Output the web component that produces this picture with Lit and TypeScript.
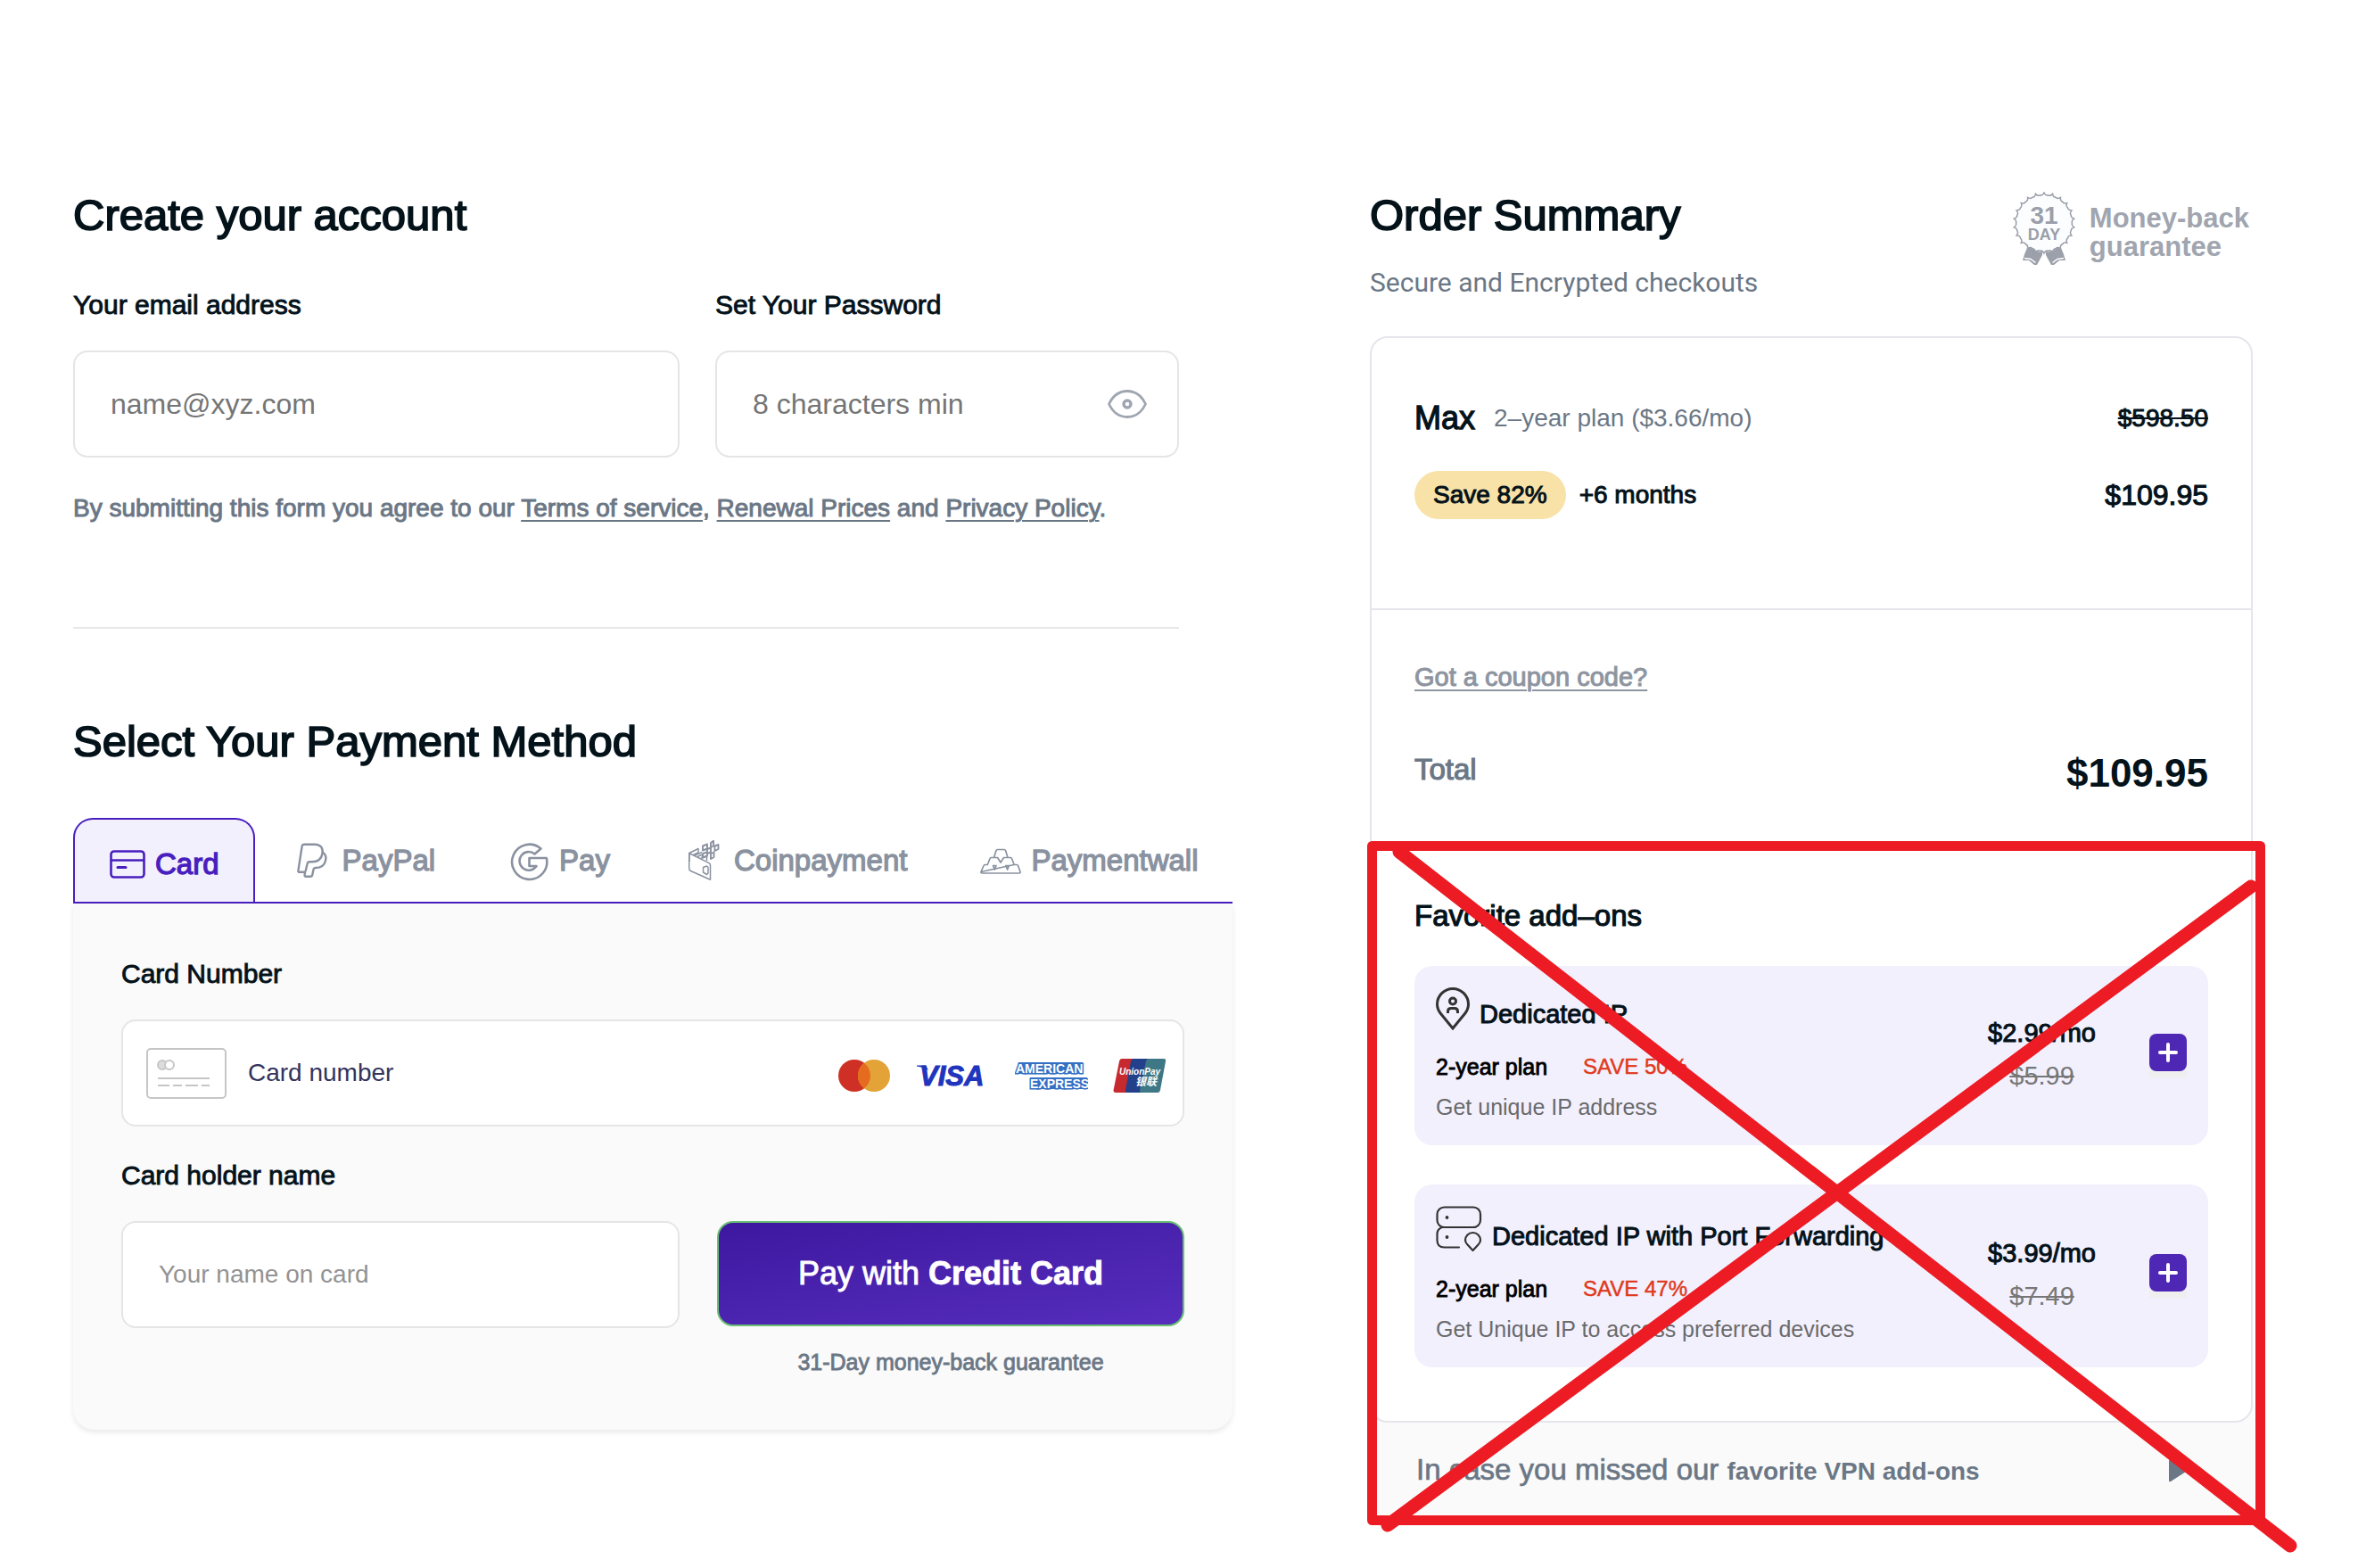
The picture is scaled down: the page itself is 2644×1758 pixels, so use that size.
import { LitElement, html, css, svg } from "lit";
import { customElement, property, state } from "lit/decorators.js";
import { classMap } from "lit/directives/class-map.js";

/* ---------- icons ---------- */

const iconCard = svg`<svg class="icon-card" width="40" height="32" viewBox="0 0 40 32" fill="none" stroke="currentColor" stroke-width="2.6" stroke-linecap="round" aria-hidden="true">
  <rect x="1.5" y="1.5" width="37" height="29" rx="3.5"/><path d="M2 11.5H38"/><path d="M9 19.5H18" stroke-width="3"/></svg>`;

const iconPaypal = svg`<svg width="46" height="46" viewBox="0 0 46 46" fill="none" stroke="currentColor" stroke-width="2.4" stroke-linejoin="round" aria-hidden="true">
  <path d="M11.6 7q.3-2.3 2.6-2.3H26C33 4.7 35.5 9.5 34.5 15 33.2 22 28.5 24.3 23 24.3h-2.5q-2.6 0-3 2.4L15.8 34q-.4 1.8-2 1.8H8.8q-1.6 0-1.4-1.7Z"/>
  <path d="M34.6 13.5C38 15.5 39 19 38 23 36.6 28.8 32.5 31 27 31h-.5q-1.6 0-2 1.8l-1.2 6q-.4 1.9-2.2 1.9H16q-1.7 0-1.4-1.7l.6-3.5"/></svg>`;

const iconGoogle = svg`<svg width="46" height="46" viewBox="0 0 46 46" fill="none" stroke="currentColor" stroke-width="2.6" stroke-linejoin="round" aria-hidden="true">
  <path d="M36.5 9.5A19.6 19.6 0 1 0 42.8 20H23.5V29H31.5A10.3 10.3 0 1 1 29.5 15.5Z"/></svg>`;

const iconCoins = svg`<svg width="46" height="46" viewBox="0 0 46 46" fill="none" stroke="currentColor" stroke-width="1.5" stroke-linejoin="round" aria-hidden="true">
  <path d="M6.7 14.5V31.5Q6.7 33.5 8.5 34.5L30.5 44.3V28Q30.5 26.5 29 25.7L6.7 14.5L17 9.5V14L11.5 16.5"/>
  <path d="M7 15.5V24"/><path d="M22.5 30.5l4-1.5 1.5 1.5v6.5l-1.5 1.5-4-2.5z"/>
  <path d="M16 18.5l5.5-2.5v4M19.5 20.5l7-2.5v5M13 17l8-3.5"/>
  <path d="M22 6.5l5-2v5l-5 2zM31 3l3-2.3v5.8l-3 1.5zM27 10l4-1.5v5l-4 1.5zM35.5 6.5l4-1.5v5l-4 2zM22 15l5-1.5v4l-5 2zM31 15l3.5-1.5v5.5l-3.5 2z" stroke-width="1.9"/></svg>`;

const iconWall = svg`<svg width="46" height="46" viewBox="0 0 46 46" fill="none" stroke="currentColor" stroke-width="1.7" stroke-linejoin="round" aria-hidden="true">
  <path d="M15.5 19.5L18 11.5Q18.3 10.5 19.5 10.5H27Q28.2 10.5 28.5 11.5L31 19.5"/>
  <path d="M8.5 27L11 20.5Q11.3 19.5 12.5 19.5H19.5L23 25L26.5 19.5H34Q35.2 19.5 35.5 20.5L38 27"/>
  <path d="M1 35.5L4 28.5Q4.4 27.5 5.5 27.5H9M38 27.5H41Q42.1 27.5 42.5 28.5L45 35.5Q45.3 37 44 37H2Q.7 37 1 35.5Z"/>
  <path d="M14.5 28.5h3.5l-1.7 4.5zM28.8 28.5h3.5l-1.7 4.5z"/></svg>`;

const iconEye = svg`<svg width="44" height="32" viewBox="0 0 44 32" fill="none" stroke="#9fa6b2" stroke-width="2.8" aria-hidden="true">
  <path d="M1.5 16C6 6.5 13 1.5 22 1.5S38 6.5 42.5 16C38 25.5 31 30.5 22 30.5S6 25.5 1.5 16Z"/><circle cx="22" cy="16" r="4" stroke-width="3.4"/></svg>`;

const iconBlankCard = svg`<svg width="90" height="57" viewBox="0 0 90 57" fill="none" stroke="#c6c6c6" stroke-width="2" aria-hidden="true">
  <rect x="1" y="1" width="88" height="55" rx="4" fill="#fff"/>
  <circle cx="18" cy="19" r="5" fill="#dcdcdc"/><circle cx="26" cy="19" r="5" fill="#fff"/>
  <path d="M13 34H71M13 42H26M30 42H40M44 42H58M62 42H71"/></svg>`;

const logoMastercard = svg`<svg width="58" height="38" viewBox="0 0 58 38" role="img" aria-label="Mastercard">
  <circle cx="18" cy="19" r="18" fill="#cf3025"/><circle cx="40" cy="19" r="18" fill="#e3a336"/>
  <path d="M29 4.8a18 18 0 0 1 0 28.4a18 18 0 0 1 0-28.4z" fill="#e56b1f"/></svg>`;

const logoVisa = svg`<svg width="84" height="38" viewBox="0 0 84 38" role="img" aria-label="Visa">
  <path d="M2 7.5H12L15 13Q10 9.5 2 8.5Z" fill="#1f35bd"/>
  <text x="5" y="30" class="logo-visa">VISA</text></svg>`;

const logoAmex = svg`<svg width="82" height="38" viewBox="0 0 82 38" role="img" aria-label="American Express">
  <path d="M4 4H76V17H1ZM17 21H81V34H17Z" fill="#3470c4"/>
  <text x="1" y="15.5" class="logo-amex">AMERICAN</text><text x="17" y="32.5" class="logo-amex">EXPRESS</text></svg>`;

const logoUnionpay = svg`<svg width="60" height="38" viewBox="0 0 60 38" role="img" aria-label="UnionPay">
  <path d="M10 0H26L18 38H3Q0 38 .6 35L7 3Q7.6 0 10 0Z" fill="#c62a2e"/>
  <path d="M23 0H42L34 38H16Q13.4 38 14 35L20 3Q20.6 0 23 0Z" fill="#22418a"/>
  <path d="M40 0H57Q59.6 0 59 3L53 35Q52.4 38 50 38H32Q29.4 38 30 35L37 3Q37.6 0 40 0Z" fill="#3e7886"/>
  <text x="7" y="18" class="logo-union">UnionPay</text><text x="25" y="30" class="logo-union-cjk">银联</text></svg>`;

const iconPin = svg`<svg width="38" height="48" viewBox="0 0 38 48" fill="none" stroke="#333" stroke-width="3" aria-hidden="true">
  <path d="M19 46L5.5 29.5Q1.5 24.5 1.5 19A17.5 17.5 0 0 1 36.5 19Q36.5 24.5 32.5 29.5Z"/>
  <circle cx="19" cy="15.5" r="3.5"/><path d="M13.5 29V27q0-3.5 3.5-3.5h4q3.5 0 3.5 3.5v2"/></svg>`;

const iconServer = svg`<svg width="52" height="52" viewBox="0 0 52 52" fill="none" stroke="#333" stroke-width="2.2" stroke-linecap="round" stroke-linejoin="round" aria-hidden="true">
  <rect x="1.5" y="1.5" width="48.5" height="22.5" rx="8"/>
  <path d="M7 24Q1.5 26 1.5 31.5V38.5Q1.5 46.5 9.5 46.5H26"/><path d="M44 24H7"/>
  <path d="M41.5 50L35.5 43.5Q33 41 33 38.5A8.5 8.5 0 0 1 50 38.5Q50 41 47.5 43.5Z"/>
  <circle cx="12.5" cy="13" r=".8" fill="#333"/><circle cx="12.5" cy="35" r=".8" fill="#333"/></svg>`;

const iconPlus = svg`<svg width="42" height="42" viewBox="0 0 42 42" aria-hidden="true">
  <rect width="42" height="42" rx="8" fill="#4e27b5"/><path d="M12 21H30M21 12V30" stroke="#fff" stroke-width="4" stroke-linecap="round"/></svg>`;

const iconArrow = svg`<svg width="20" height="26" viewBox="0 0 20 26" aria-hidden="true"><path d="M0 2Q0 0 2 1L19 12Q20 13 19 14L2 25Q0 26 0 24Z" fill="#6b7785"/></svg>`;

/** Scalloped outline of the guarantee seal. */
const sealPath = (() => {
  const teeth = 22;
  let d = "";
  for (let i = 0; i < teeth; i++) {
    const at = (k: number, r: number) => {
      const a = ((i + k) / teeth) * Math.PI * 2 - Math.PI / 2;
      return `${(35 + r * Math.cos(a)).toFixed(2)} ${(35 + r * Math.sin(a)).toFixed(2)}`;
    };
    d += `${i ? "L" : "M"}${at(0, 34)}Q${at(0.2, 30.5)} ${at(0.5, 31.5)}Q${at(0.8, 30.5)} ${at(1, 34)}`;
  }
  return d + "Z";
})();

const iconSeal = svg`<svg width="70" height="84" viewBox="0 0 70 84" role="img" aria-label="31 day seal">
  <path d="${sealPath}" fill="#fcfdff" stroke="#9a9fa9" stroke-width="1.5"/>
  <path d="M16 63Q22 62 25 66Q29 68 33 67L33 71L27 82L24 82L18 77L11 77Q13 69 16 63Z" fill="#9ba0ab"/>
  <path d="M54 63Q48 62 46 66Q41 68 37 67L37 71L43 82L46 82L52 77L59 77Q57 69 54 63Z" fill="#9ba0ab"/>
  <path d="M13 74.5L20 75.5L25.5 79.5M57 74.5L50 75.5L44.5 79.5" stroke="#fff" stroke-width="1.5" fill="none"/>
  <text x="35" y="36" class="seal-num">31</text><text x="35" y="54" class="seal-day">DAY</text></svg>`;

/* ---------- shared styles ---------- */

const base = css`
  * {
    box-sizing: border-box;
  }
  h1, h2, h3, p {
    margin: 0;
    font-weight: 400;
  }
  button, input {
    font-family: inherit;
    color: inherit;
    margin: 0;
    padding: 0;
    border: 0;
    background: none;
  }
  button {
    cursor: pointer;
  }
  svg {
    display: block;
    flex: none;
  }
  .medium {
    -webkit-text-stroke: 0.035em currentColor;
  }
  .title {
    font-size: 49px;
    line-height: 56px;
    -webkit-text-stroke: 0.035em currentColor;
  }
`;

interface Method {
  id: string;
  label: string;
  icon: unknown;
}

const methods: Method[] = [
  { id: "card", label: "Card", icon: iconCard },
  { id: "paypal", label: "PayPal", icon: iconPaypal },
  { id: "gpay", label: "Pay", icon: iconGoogle },
  { id: "coin", label: "Coinpayment", icon: iconCoins },
  { id: "wall", label: "Paymentwall", icon: iconWall },
];

@customElement("checkout-form")
export class CheckoutForm extends LitElement {
  @state() private method = "card";
  @state() private showPassword = false;

  static styles = [
    base,
    css`
      :host {
        display: block;
        min-width: 0;
      }
      .account {
        padding-right: 60px;
      }
      .account-fields {
        display: grid;
        grid-template-columns: 680fr 520fr;
        gap: 40px;
        margin-top: 55px;
      }
      .field {
        display: flex;
        flex-direction: column;
        gap: 33px;
        min-width: 0;
      }
      .label {
        font-size: 30px;
        line-height: 36px;
        -webkit-text-stroke: 0.03em currentColor;
      }
      .box {
        display: flex;
        align-items: center;
        height: 120px;
        border: 2px solid #e5e5e5;
        border-radius: 16px;
        background: #fff;
        padding: 0 34px 0 40px;
      }
      .box input {
        flex: 1;
        min-width: 0;
        height: 100%;
        font-size: 32px;
        outline: none;
      }
      .box input::placeholder {
        color: #757575;
        opacity: 1;
      }
      .terms {
        margin-top: 39px;
        font-size: 28px;
        line-height: 36px;
        color: #6b7785;
      }
      .terms a {
        color: inherit;
        text-underline-offset: 4px;
        text-decoration-thickness: 2px;
      }
      .rule {
        margin: 115px 0 98px;
        border: 0;
        border-top: 2px solid #e8e8e8;
      }
      .tabs {
        display: flex;
        margin-top: 58px;
        border-bottom: 2px solid #481fbe;
        min-height: 96px;
      }
      .tab {
        display: flex;
        align-items: center;
        justify-content: center;
        gap: 11px;
        padding: 2px 41px 0;
        font-size: 33px;
        line-height: 40px;
        color: #8a92a0;
        white-space: nowrap;
        -webkit-text-stroke: 0.04em currentColor;
      }
      .tab.active {
        color: #481fbe;
        background: #f3f0fe;
        border: 2px solid #481fbe;
        border-bottom: 0;
        border-radius: 22px 22px 0 0;
        padding: 8px 38px 0 39px;
      }
      .panel {
        background: #fafafa;
        border-radius: 0 0 24px 24px;
        box-shadow: 0 3px 6px rgba(0, 0, 0, 0.09);
        padding: 61px 54px 60px;
      }
      .card-box {
        padding: 0 18px 0 26px;
        gap: 24px;
      }
      .card-box input,
      .name-box input {
        font-size: 28px;
      }
      .card-box input::placeholder {
        color: #33345c;
      }
      .name-box input::placeholder {
        color: #939393;
      }
      .brands {
        display: flex;
        align-items: center;
        gap: 28px;
        padding-top: 6px;
      }
      .pay-row {
        display: grid;
        grid-template-columns: 626fr 524fr;
        column-gap: 42px;
        align-items: start;
        margin-top: 37px;
      }
      .pay-col {
        display: flex;
        flex-direction: column;
        padding-top: 69px;
      }
      .pay {
        height: 118px;
        border: 2px solid #69bf73;
        border-radius: 18px;
        background: linear-gradient(170deg, #3d189f, #562dbd);
        color: #fff;
        font-size: 36px;
        -webkit-text-stroke: 0.025em currentColor;
      }
      .note {
        margin-top: 24px;
        font-size: 25px;
        line-height: 32px;
        text-align: center;
        color: #6b7785;
      }
      .logo-visa {
        font: italic 900 31px "Liberation Sans", Arial, sans-serif;
        fill: #1f35bd;
        stroke: #1f35bd;
        stroke-width: 1px;
      }
      .logo-amex {
        font: 700 14px "Liberation Sans", Arial, sans-serif;
        fill: #fff;
        stroke: #3470c4;
        stroke-width: 3px;
        paint-order: stroke;
      }
      .logo-union {
        font: italic 700 10px "Liberation Sans", Arial, sans-serif;
        fill: #fff;
      }
      .logo-union-cjk {
        font: italic 700 12px "Noto Sans CJK SC", sans-serif;
        fill: #fff;
      }
    `,
  ];

  render() {
    return html`
      <section class="account">
        <h1 class="title">Create your account</h1>
        <div class="account-fields">
          <div class="field">
            <label class="label" for="email">Your email address</label>
            <div class="box"><input id="email" type="email" placeholder="name@xyz.com" /></div>
          </div>
          <div class="field">
            <label class="label" for="password">Set Your Password</label>
            <div class="box">
              <input id="password" type=${this.showPassword ? "text" : "password"} placeholder="8 characters min" />
              <button type="button" aria-label="Show password" @click=${() => (this.showPassword = !this.showPassword)}>${iconEye}</button>
            </div>
          </div>
        </div>
        <p class="terms medium">By submitting this form you agree to our <a href="#terms">Terms of service</a>, <a href="#renewal">Renewal Prices</a> and <a href="#privacy">Privacy Policy</a>.</p>
        <hr class="rule" />
      </section>
      <section>
        <h2 class="title">Select Your Payment Method</h2>
        <div class="tabs" role="tablist">
          ${methods.map(
            (m) => html`<button type="button" role="tab" aria-selected=${m.id === this.method ? "true" : "false"}
              class=${classMap({ tab: true, active: m.id === this.method })}
              @click=${() => (this.method = m.id)}>${m.icon}<span>${m.label}</span></button>`
          )}
        </div>
        <div class="panel">
          <div class="field">
            <label class="label" for="number">Card Number</label>
            <div class="box card-box">
              ${iconBlankCard}
              <input id="number" inputmode="numeric" placeholder="Card number" />
              <div class="brands">${logoMastercard}${logoVisa}${logoAmex}${logoUnionpay}</div>
            </div>
          </div>
          <div class="pay-row">
            <div class="field">
              <label class="label" for="holder">Card holder name</label>
              <div class="box name-box"><input id="holder" placeholder="Your name on card" /></div>
            </div>
            <div class="pay-col">
              <button type="button" class="pay">Pay with <b>Credit Card</b></button>
              <p class="note medium">31-Day money-back guarantee</p>
            </div>
          </div>
        </div>
      </section>
    `;
  }
}

@customElement("addon-item")
export class AddonItem extends LitElement {
  @property() name = "";
  @property() save = "";
  @property() info = "";
  @property() price = "";
  @property() was = "";
  @property({ attribute: false }) icon: unknown;

  static styles = [
    base,
    css`
      :host {
        display: flex;
        align-items: center;
        background: #f3f0fe;
        border-radius: 20px;
        padding: 24px 24px 27px 24px;
      }
      .main {
        flex: 1;
        min-width: 0;
      }
      .head {
        display: flex;
        align-items: flex-end;
        gap: 11px;
      }
      .name, .price, .was {
        font-size: 29px;
        line-height: 36px;
      }
      .plan {
        display: flex;
        gap: 40px;
        margin-top: 25px;
        font-size: 25px;
        line-height: 32px;
        color: #000;
      }
      .save {
        color: #e03a1c;
        font-size: 24px;
        -webkit-text-stroke: 0.02em currentColor;
      }
      .info {
        margin-top: 13px;
        font-size: 25px;
        line-height: 32px;
        color: #6a6a6a;
      }
      .prices {
        display: flex;
        flex-direction: column;
        align-items: center;
        gap: 12px;
        margin-right: 60px;
      }
      .was {
        color: #777;
      }
      .add {
        margin-top: 3px;
        height: 49px;
        background: #efefef;
        display: flex;
        align-items: flex-start;
      }
    `,
  ];

  render() {
    return html`
      <div class="main">
        <div class="head">${this.icon}<h3 class="name medium">${this.name}</h3></div>
        <p class="plan"><span class="medium">2-year plan</span><span class="save">${this.save}</span></p>
        <p class="info">${this.info}</p>
      </div>
      <div class="prices"><span class="price medium">${this.price}</span><s class="was">${this.was}</s></div>
      <button type="button" class="add" aria-label=${"Add " + this.name}>${iconPlus}</button>
    `;
  }
}

@customElement("order-summary")
export class OrderSummary extends LitElement {
  static styles = [
    base,
    css`
      :host {
        display: block;
        position: relative;
        min-width: 0;
      }
      .header {
        display: flex;
        justify-content: space-between;
        align-items: flex-start;
      }
      .sub {
        margin-top: 30px;
        font: 400 30px/36px Roboto, "Liberation Sans", sans-serif;
        color: #6b7785;
      }
      .badge {
        display: flex;
        align-items: center;
        gap: 16px;
        padding: 2px 4px 0 0;
      }
      .badge-text {
        padding-top: 8px;
        font-size: 31px;
        line-height: 32px;
        font-weight: 700;
        color: #a0a5af;
      }
      .seal-num, .seal-day {
        font: 700 28px "Liberation Sans", Arial, sans-serif;
        fill: #9a9fa9;
        text-anchor: middle;
      }
      .seal-day {
        font: 700 18px "Liberation Sans Narrow", "Liberation Sans", sans-serif;
      }
      .card {
        position: relative;
        margin-top: 42px;
        border: 2px solid #e5e5ec;
        border-radius: 20px;
        background: #fff;
      }
      .plan {
        padding: 68px 48px 100px;
        border-bottom: 2px solid #e5e5ec;
      }
      .row {
        display: flex;
        align-items: center;
      }
      .row + .row {
        margin-top: 37px;
      }
      .push {
        margin-left: auto;
      }
      .max {
        font-size: 36px;
        line-height: 44px;
        margin-right: 21px;
      }
      .text {
        font-size: 28px;
        line-height: 36px;
      }
      .muted {
        color: #6b7785;
      }
      .pill {
        background: #f9e2a8;
        border-radius: 27px;
        padding: 9px 21px;
        margin-right: 15px;
        font-size: 28px;
        line-height: 36px;
      }
      .price {
        font-size: 32px;
        line-height: 40px;
      }
      .totals {
        padding: 57px 48px 60px;
      }
      .coupon {
        display: inline-block;
        font-size: 29px;
        line-height: 36px;
        color: #8d95a1;
        text-underline-offset: 4px;
        text-decoration-thickness: 2px;
      }
      .total {
        display: flex;
        align-items: flex-start;
        justify-content: space-between;
        margin-top: 62px;
      }
      .total-label {
        font-size: 33px;
        line-height: 48px;
        color: #6b7785;
      }
      .total-sum {
        font-size: 44px;
        line-height: 56px;
        font-weight: 700;
      }
      .fav {
        margin: 112px 0 36px;
        font-size: 33px;
        line-height: 40px;
      }
      .addons {
        display: flex;
        flex-direction: column;
        gap: 44px;
      }
      .more {
        display: flex;
        align-items: center;
        justify-content: space-between;
        width: 100%;
        margin-top: -24px;
        padding: 57px 74px 34px 52px;
        background: #fafafa;
        border-radius: 0 0 20px 20px;
        box-shadow: 0 2px 5px rgba(0, 0, 0, 0.06);
        color: #6b7785;
        font-size: 33px;
        line-height: 40px;
        text-align: left;
      }
      .more b {
        font-size: 28px;
        -webkit-text-stroke: 0;
      }
      .more-text {
        -webkit-text-stroke: 0.02em currentColor;
      }
      /* Hand-drawn markup laid over the add-ons. */
      .markup {
        position: absolute;
        left: -6px;
        top: 727px;
        pointer-events: none;
      }
    `,
  ];

  render() {
    return html`
      <header class="header">
        <div>
          <h2 class="title">Order Summary</h2>
          <p class="sub">Secure and Encrypted checkouts</p>
        </div>
        <div class="badge">${iconSeal}<div class="badge-text">Money-back<br />guarantee</div></div>
      </header>
      <div class="card">
        <div class="plan">
          <div class="row">
            <span class="max medium">Max</span><span class="text muted">2–year plan ($3.66/mo)</span>
            <s class="text medium push">$598.50</s>
          </div>
          <div class="row">
            <span class="pill medium">Save 82%</span><span class="text medium">+6 months</span>
            <span class="price medium push">$109.95</span>
          </div>
        </div>
        <div class="totals">
          <a class="coupon medium" href="#coupon">Got a coupon code?</a>
          <div class="total"><span class="total-label medium">Total</span><span class="total-sum">$109.95</span></div>
          <h3 class="fav medium">Favorite add–ons</h3>
          <div class="addons">
            <addon-item .icon=${iconPin} name="Dedicated IP" save="SAVE 50%" info="Get unique IP address" price="$2.99/mo" was="$5.99"></addon-item>
            <addon-item .icon=${iconServer} name="Dedicated IP with Port Forwarding" save="SAVE 47%" info="Get Unique IP to access preferred devices" price="$3.99/mo" was="$7.49"></addon-item>
          </div>
        </div>
      </div>
      <button type="button" class="more">
        <span class="more-text">In case you missed our <b>favorite VPN add-ons</b></span>
        ${iconArrow}
      </button>
      <svg class="markup" width="1050" height="805" viewBox="1530 940 1050 805" fill="none" stroke="#ed1c24" stroke-linecap="round" stroke-linejoin="round" aria-hidden="true">
        <rect x="1538.5" y="948.5" width="996" height="756" stroke-width="11"/>
        <path d="M1569 955L2568 1733M1556 1710L2524 994" stroke-width="15"/>
      </svg>
    `;
  }
}

@customElement("app-root")
export class AppRoot extends LitElement {
  static styles = css`
    :host {
      display: block;
      box-sizing: border-box;
      min-height: 100vh;
      background: #fff;
      color: #04121a;
      font-family: "Liberation Sans", Arial, sans-serif;
    }
    .page {
      display: grid;
      grid-template-columns: 1300fr 990fr;
      column-gap: 154px;
      align-items: start;
      padding: 213px 118px 48px 82px;
    }
  `;

  render() {
    return html`<main class="page"><checkout-form></checkout-form><order-summary></order-summary></main>`;
  }
}
